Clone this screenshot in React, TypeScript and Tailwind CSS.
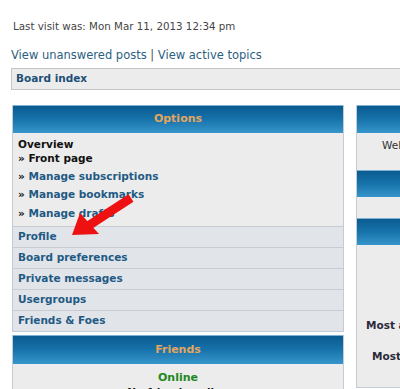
import React from "react";

const rows = ["Profile", "Board preferences", "Private messages", "Usergroups", "Friends & Foes"];

function Head({ title, h = "h-[28px]" }: { title?: string; h?: string }) {
  return (
    <div
      className={`${h} border-t border-[#7fb0d3] bg-gradient-to-b from-[#0a5b90] via-[#1773ab] to-[#3696cb] flex items-center justify-center text-[11px] font-bold text-[#e2a65f]`}
    >
      {title}
    </div>
  );
}

export default function App() {
  return (
    <div className="relative w-[400px] h-[389px] overflow-hidden bg-white text-[#333]" style={{ fontFamily: '"DejaVu Sans", Verdana, sans-serif' }}>
      {/* cut off top line */}
      <div className="h-[3px] overflow-hidden">
        <div className="-mt-[12px] pl-[13px] flex items-center gap-[4px] text-[11px] leading-[14px] text-[#6f93b3] whitespace-nowrap">
          <span className="inline-block w-[11px] h-[8px] border border-[#9fb5c8]" />
          <span>Logout [ Blackstorm-Serf ]</span>
          <span className="ml-[10px] inline-block w-[11px] h-[8px] border border-[#9fb5c8]" />
          <span>0 new messages</span>
        </div>
      </div>

      <div className="mt-[16px] pl-[13px] text-[10.3px] leading-[14px] text-[#444]">Last visit was: Mon Mar 11, 2013 12:34 pm</div>

      <div className="mt-[14px] pl-[11px] text-[11.5px] leading-[16px] text-[#2b5f82]">
        View unanswered posts <span className="text-[#555]">|</span> View active topics
      </div>

      <div className="mt-[5px] ml-[11px] w-[420px] h-[22px] border border-[#c4c4c4] bg-[#ececec] flex items-center pl-[4px] text-[10.5px] font-bold text-[#1d4f76]">
        Board index
      </div>

      <div className="mt-[15px] flex gap-[12px] pl-[12px]">
        {/* left column */}
        <div className="w-[332px] shrink-0 flex flex-col gap-[3px]">
          <div className="border border-[#c3ccd6] border-t-0">
            <Head title="Options" />
            <div className="bg-[#ececec] h-[93px] pl-[5px] pt-[4px] text-[10.5px] font-bold">
              <div className="leading-[14px] text-[#111]">Overview</div>
              <div className="leading-[14px] text-[#111]">» Front page</div>
              <div className="mt-[4px] leading-[14px] text-[#1f5a84]"><span className="text-[#111]">»</span> Manage subscriptions</div>
              <div className="mt-[4px] leading-[14px] text-[#1f5a84]"><span className="text-[#111]">»</span> Manage bookmarks</div>
              <div className="mt-[5px] leading-[14px] text-[#1f5a84]"><span className="text-[#111]">»</span> Manage drafts</div>
            </div>
            {rows.map((r) => (
              <div
                key={r}
                className="h-[21px] border-t border-[#c8ccd2] bg-[#e1e4e9] flex items-center pl-[5px] text-[10.5px] font-bold text-[#1f5a84]"
              >
                {r}
              </div>
            ))}
          </div>

          <div className="border border-[#c3ccd6] border-t-0">
            <Head title="Friends" h="h-[29px]" />
            <div className="bg-[#ececec] h-[40px] pt-[6px] text-center text-[11px] font-bold">
              <div className="leading-[15px] text-[#228822]">Online</div>
              <div className="leading-[14px] text-[10.5px] text-[#111]">No friends online</div>
            </div>
          </div>
        </div>

        {/* right column */}
        <div className="w-[200px] shrink-0">
          <div className="border border-[#c3ccd6] border-t-0">
            <Head />
            <div className="bg-[#ececec] h-[37px] pt-[5px] pl-[25px] text-[10.5px] leading-[14px] text-[#333] whitespace-nowrap">Welcome to</div>
            <Head h="h-[27px]" />
            <div className="bg-[#ececec] h-[21px]" />
            <Head h="h-[27px]" />
            <div className="bg-[#ececec] h-[142px] pt-[73px] text-[10.5px] font-bold text-[#2a2a3a] whitespace-nowrap">
              <div className="pl-[9px] leading-[14px]">Most active forum</div>
              <div className="mt-[17px] pl-[15px] leading-[14px]">Most active topic</div>
            </div>
          </div>
        </div>
      </div>

      {/* red arrow overlay */}
      <svg className="absolute left-0 top-0" width="400" height="389" viewBox="0 0 400 389">
        <path d="M131 198 L88 226" stroke="#ee1111" strokeWidth="9" strokeLinecap="butt" />
        <polygon points="72,235 80,213 99,234" fill="#ee1111" />
      </svg>
    </div>
  );
}
